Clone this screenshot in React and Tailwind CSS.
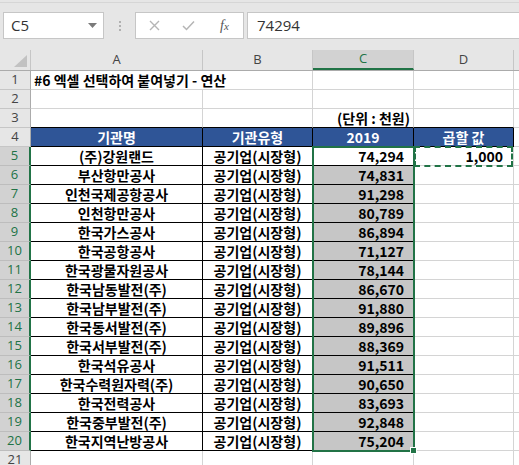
import React from "react";

const GREEN = "#217346";
const names = ["(주)강원랜드","부산항만공사","인천국제공항공사","인천항만공사","한국가스공사","한국공항공사","한국광물자원공사","한국남동발전(주)","한국남부발전(주)","한국동서발전(주)","한국서부발전(주)","한국석유공사","한국수력원자력(주)","한국전력공사","한국중부발전(주)","한국지역난방공사"];
const values = ["74,294","74,831","91,298","80,789","86,894","71,127","78,144","86,670","91,880","89,896","88,369","91,511","90,650","83,693","92,848","75,204"];

const KR = { fontFamily: '"Noto Sans CJK KR", "Noto Sans", sans-serif' };

function TopBar() {
  return (
    <div className="h-[50px] bg-[#e6e6e6] relative">
      <div className="h-[3px] border-b border-[#d6d6d6]" />
      <div className="flex pt-[9px]">
        <div className="ml-[3px] w-[101px] h-[27px] bg-white border border-[#c6c6c6] flex items-center justify-between pl-[7px] pr-[6px]">
          <span className="text-[15px] text-[#333]" style={{ fontFamily: '"Open Sans", sans-serif' }}>C5</span>
          <svg width="9" height="5" viewBox="0 0 9 5"><path d="M0 0 L9 0 L4.5 5 Z" fill="#7a7a7a" /></svg>
        </div>
        <div className="w-[31px] flex flex-col items-center justify-center gap-[2px]">
          <div className="w-[2px] h-[2px] bg-[#b0b0b0]" />
          <div className="w-[2px] h-[2px] bg-[#b0b0b0]" />
          <div className="w-[2px] h-[2px] bg-[#b0b0b0]" />
        </div>
        <div className="w-[109px] h-[27px] bg-white border border-[#c6c6c6] flex items-center">
          <svg className="ml-[13px]" width="11" height="11" viewBox="0 0 11 11"><path d="M1 1 L10 10 M10 1 L1 10" stroke="#b5b5b5" strokeWidth="1.4" /></svg>
          <svg className="ml-[22px]" width="13" height="11" viewBox="0 0 13 11"><path d="M1 6 L4.5 9.5 L12 1.5" stroke="#b5b5b5" strokeWidth="1.5" fill="none" /></svg>
          <span className="ml-[25px] italic text-[14px] text-[#555]" style={{ fontFamily: '"Liberation Serif", serif' }}>f<span className="text-[11px]">x</span></span>
        </div>
        <div className="ml-[3px] flex-1 h-[27px] bg-white border border-r-0 border-[#c6c6c6] flex items-center pl-[9px]">
          <span className="text-[15px] text-[#333]" style={{ fontFamily: '"Open Sans", sans-serif' }}>74294</span>
        </div>
      </div>
    </div>
  );
}

const COLS = [
  { k: "A", w: "w-[172px]" },
  { k: "B", w: "w-[110px]" },
  { k: "C", w: "w-[101px]" },
  { k: "D", w: "w-[100px]" },
];

function ColHeader() {
  return (
    <div className="flex h-[21px] bg-[#e6e6e6] border-b border-[#ababab]">
      <div className="w-[31px] shrink-0 border-r border-[#c6c6c6] relative">
        <svg className="absolute right-[3px] bottom-[3px]" width="13" height="12" viewBox="0 0 13 12"><path d="M13 0 L13 12 L0 12 Z" fill="#c2c2c2" /></svg>
      </div>
      {COLS.map((c) => (
        <div
          key={c.k}
          className={`${c.w} shrink-0 border-r border-[#c6c6c6] flex items-center justify-center text-[13px] ${c.k === "C" ? "bg-[#d2d2d2] text-[#217346] border-b-2 border-b-[#217346]" : "text-[#444]"}`}
          style={{ fontFamily: '"Open Sans", sans-serif' }}
        >
          {c.k}
        </div>
      ))}
      <div className="flex-1" />
    </div>
  );
}

function RowHead({ n, sel }) {
  return (
    <div
      className={`w-[31px] shrink-0 flex items-center justify-center text-[13px] border-b ${sel ? "bg-[#d2d2d2] text-[#217346] border-b-[#bdbdbd] border-r-2 border-r-[#217346]" : "bg-[#e6e6e6] text-[#444] border-b-[#c6c6c6] border-r border-r-[#ababab]"}`}
      style={{ fontFamily: '"Open Sans", sans-serif' }}
    >
      {n}
    </div>
  );
}

function Cell({ w, children, cls = "" }) {
  return (
    <div className={`${w} shrink-0 h-full border-r border-b flex items-center whitespace-nowrap ${cls}`}>
      {children}
    </div>
  );
}

function Row({ n, sel, children }) {
  return (
    <div className="flex h-[19px]">
      <RowHead n={n} sel={sel} />
      {children}
      <div className="flex-1 border-b border-[#d4d4d4]" />
    </div>
  );
}

const G = "border-[#d4d4d4]";

export default function App() {
  return (
    <div className="w-[519px] h-[465px] overflow-hidden bg-white relative" style={KR}>
      <TopBar />
      <div className="relative">
        <ColHeader />
        <Row n={1}>
          <Cell w="w-[172px]" cls="border-r-0 border-b-[#d4d4d4] overflow-visible">
            <span className="pl-[3px] font-bold text-[14px] text-black">#6 엑셀 선택하여 붙여넣기 - 연산</span>
          </Cell>
          <Cell w="w-[110px]" cls={G} />
          <Cell w="w-[101px]" cls={G} />
          <Cell w="w-[100px]" cls={G} />
        </Row>
        <Row n={2}>
          <Cell w="w-[172px]" cls={G} />
          <Cell w="w-[110px]" cls={G} />
          <Cell w="w-[101px]" cls={G} />
          <Cell w="w-[100px]" cls={G} />
        </Row>
        <Row n={3}>
          <Cell w="w-[172px]" cls="border-r-[#d4d4d4] border-b-black" />
          <Cell w="w-[110px]" cls="border-r-[#d4d4d4] border-b-black" />
          <Cell w="w-[101px]" cls="border-r-[#d4d4d4] border-b-black justify-end pr-[3px]">
            <span className="font-bold text-[14px] text-black">(단위 : 천원)</span>
          </Cell>
          <Cell w="w-[100px]" cls="border-r-[#d4d4d4] border-b-black" />
        </Row>
        <Row n={4}>
          {["기관명", "기관유형", "2019", "곱할 값"].map((t, i) => (
            <Cell key={t} w={COLS[i].w} cls="bg-[#2f5597] border-black justify-center">
              <span className="font-bold text-[14px] text-white">{t}</span>
            </Cell>
          ))}
        </Row>
        {names.map((nm, i) => (
          <Row key={nm} n={i + 5} sel>
            <Cell w="w-[172px]" cls="border-black justify-center">
              <span className="font-bold text-[14px] text-black">{nm}</span>
            </Cell>
            <Cell w="w-[110px]" cls="border-black justify-center">
              <span className="font-bold text-[14px] text-black">공기업(시장형)</span>
            </Cell>
            <Cell w="w-[101px]" cls={`border-black justify-end pr-[9px] ${i === 0 ? "bg-white" : "bg-[#c6c6c6]"}`}>
              <span className="font-bold text-[14px] text-black">{values[i]}</span>
            </Cell>
            <Cell w="w-[100px]" cls={`${G} justify-end pr-[10px]`}>
              {i === 0 && <span className="font-bold text-[14px] text-black">1,000</span>}
            </Cell>
          </Row>
        ))}
        <Row n={21}>
          <Cell w="w-[172px]" cls={G} />
          <Cell w="w-[110px]" cls={G} />
          <Cell w="w-[101px]" cls={G} />
          <Cell w="w-[100px]" cls={G} />
        </Row>

        {/* selection C5:C20 */}
        <div className="absolute left-[312px] top-[96px] w-[103px] h-[306px] border-2 border-[#217346] pointer-events-none" />
        <div className="absolute left-[410px] top-[397px] w-[7px] h-[7px] bg-[#217346] border border-white" />
        {/* copy marquee D5 */}
        <div className="absolute left-[414px] top-[96px] w-[99px] h-[21px] border-2 border-dashed border-[#217346] pointer-events-none" />
      </div>
    </div>
  );
}
